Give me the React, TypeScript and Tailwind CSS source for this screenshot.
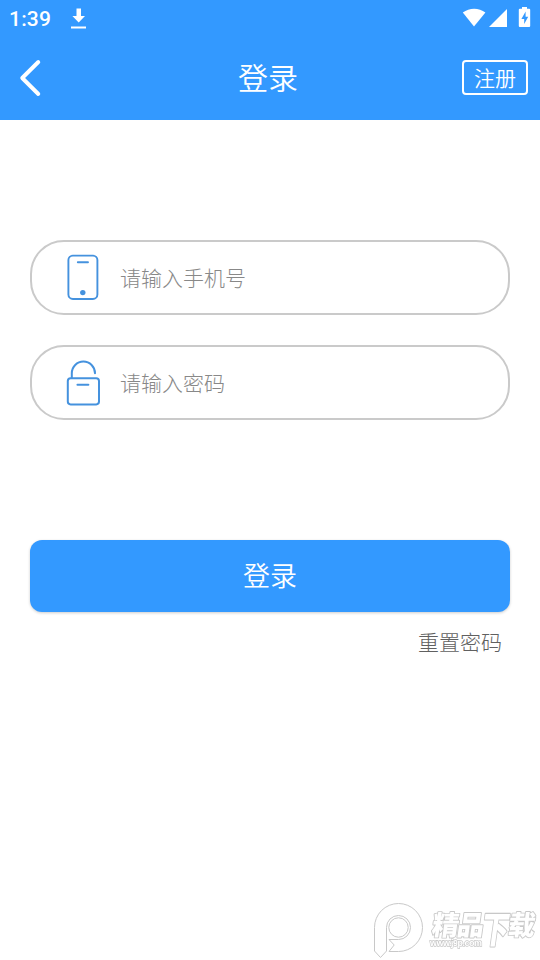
import { useState } from "react";

type FieldProps = {
  type: "tel" | "password";
  placeholder: string;
  value: string;
  onChange: (value: string) => void;
  icon: React.ReactNode;
};

function StatusBar() {
  return (
    <div className="flex h-9 items-center justify-between pl-[9px] pr-[9px] text-white">
      <div className="flex items-center">
        <span className="w-[61px] pt-px font-['Roboto',sans-serif] text-[21px] font-medium leading-9 tracking-[0.2px]">
          1:39
        </span>
        <svg width="17" height="22" viewBox="0 0 17 22" fill="currentColor">
          <path d="M6.5 1.5h4.500v7.500h4L8.700 15.500 2.400 9h4.100zM1 19.500h15v2H1z" />
        </svg>
      </div>
      <svg width="69" height="22" viewBox="0 0 69 22" fill="currentColor">
        <path d="M.8 5.600C7.300.4 17 .4 23.400 5.600L12 19.600z" />
        <path d="M45 2v18H27z" />
        <path
          fillRule="evenodd"
          d="M60 0h5v1.800h2.200q1 0 1 1v16.200q0 1-1 1h-9.400q-1 0-1-1V2.800q0-1 1-1H60zM63.600 4.500l-4.200 7.400h2.800v5.200l4-7.400h-2.600z"
        />
      </svg>
    </div>
  );
}

function PhoneIcon() {
  return (
    <svg width="36" height="48" viewBox="0 0 36 48" fill="none" stroke="#4592de">
      <rect x="3.4" y="1.6" width="29" height="43.4" rx="4.5" strokeWidth="1.9" />
      <path d="M12.8 8.2h10.200" strokeWidth="1.9" strokeLinecap="round" />
      <circle cx="17.8" cy="38.600" r="2.7" fill="#4592de" stroke="none" />
    </svg>
  );
}

function LockIcon() {
  return (
    <svg width="36" height="48" viewBox="0 0 36 48" fill="none" stroke="#4592de">
      <path
        d="M6.8 19v-4.800a11.600 11.600 0 0 1 23.200 0"
        strokeWidth="2"
        strokeLinecap="round"
      />
      <rect x="2.8" y="19.200" width="31.200" height="26.200" rx="2.8" strokeWidth="2" />
      <path d="M12.400 25.800h11" strokeWidth="1.9" strokeLinecap="round" />
    </svg>
  );
}

function Field({ type, placeholder, value, onChange, icon }: FieldProps) {
  return (
    <label className="flex h-[75px] items-center rounded-[34px] border-2 border-[#cacaca] pl-[33px] pr-6">
      {icon}
      <input
        type={type}
        value={value}
        placeholder={placeholder}
        onChange={(e) => onChange(e.target.value)}
        className="ml-[19px] min-w-0 flex-1 bg-transparent text-[21px] font-light text-[#333] outline-none placeholder:text-[#888]"
      />
    </label>
  );
}

function Watermark() {
  return (
    <svg
      className="fixed bottom-0 right-0 overflow-visible"
      width="170"
      height="60"
      viewBox="0 0 170 60"
      fill="none"
      stroke="#c8c8c8"
      strokeWidth="1"
    >
      <path d="M28.500 51.500a24 24 0 1 0-24-24V51l6 6.500 6-6.500V27.500a12 12 0 1 1 12 12H19l5.200 5.500-5.200 6.500z" />
      <circle cx="28.500" cy="27.500" r="9.700" />
      <g
        className="font-['Noto_Sans_CJK_SC',sans-serif] font-black"
        fill="#fff"
        strokeWidth="1.8"
        paintOrder="stroke"
        strokeLinejoin="round"
      >
        <g transform="skewX(-8)">
          <text x="66" y="35" fontSize="27">
            精
          </text>
          <text x="91" y="35" fontSize="27">
            品
          </text>
          <text fontSize="31" transform="translate(116 43) scale(.88 1.200)">
            下
          </text>
          <text x="142" y="35" fontSize="27">
            载
          </text>
        </g>
      </g>
      <text
        x="60"
        y="46"
        fontSize="9"
        textLength="52"
        fill="#fff"
        strokeWidth="1.300"
        paintOrder="stroke"
        className="font-['Liberation_Sans',sans-serif] font-bold"
      >
        www.j9p.com
      </text>
    </svg>
  );
}

export default function App() {
  const [phone, setPhone] = useState("");
  const [password, setPassword] = useState("");

  return (
    <div className="min-h-screen bg-white font-['Noto_Sans_CJK_SC',sans-serif]">
      <header className="h-[120px] bg-[#3399ff] text-white">
        <StatusBar />
        <div className="grid h-[83px] grid-cols-[1fr_auto_1fr] items-center px-3">
          <button type="button" aria-label="返回" className="w-fit pl-[7px]">
            <svg width="24" height="38" viewBox="0 0 24 38" fill="none">
              <path
                d="M19.300 3L3.200 19l16.100 16"
                stroke="currentColor"
                strokeWidth="3.900"
                strokeLinecap="round"
                strokeLinejoin="round"
              />
            </svg>
          </button>
          <h1 className="pb-[4px] pr-[4px] text-[30px] font-[350] leading-[44px]">登录</h1>
          <button
            type="button"
            className="h-[35px] w-[66px] justify-self-end rounded-[4px] border-2 border-white text-[21px] font-[350] leading-[31px]"
          >
            注册
          </button>
        </div>
      </header>

      <main className="px-[30px] pt-[120px]">
        <div className="flex flex-col gap-[30px]">
          <Field
            type="tel"
            placeholder="请输入手机号"
            value={phone}
            onChange={setPhone}
            icon={<PhoneIcon />}
          />
          <Field
            type="password"
            placeholder="请输入密码"
            value={password}
            onChange={setPassword}
            icon={<LockIcon />}
          />
        </div>

        <button
          type="button"
          className="mt-[120px] block h-[72px] w-full rounded-xl bg-[#3399ff] pb-[2px] text-[27px] font-[350] leading-[70px] text-white shadow-[0_1px_3px_rgba(0,0,0,0.2)]"
        >
          登录
        </button>
        <div className="flex justify-end pr-2 pt-[14px]">
          <button type="button" className="text-[21px] font-light leading-[31px] text-[#606060]">
            重置密码
          </button>
        </div>
      </main>

      <Watermark />
    </div>
  );
}
